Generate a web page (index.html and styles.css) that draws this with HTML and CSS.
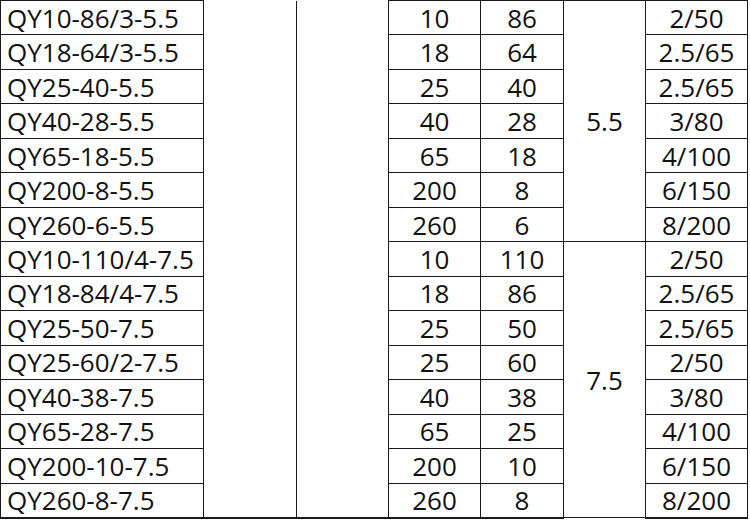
FILE: index.html
```html
<!DOCTYPE html>
<html>
<head>
<meta charset="utf-8">
<link rel="stylesheet" href="styles.css">
</head>
<body>
<table class="spec">
  <colgroup>
    <col class="c-model">
    <col class="c-blank1">
    <col class="c-blank2">
    <col class="c-flow">
    <col class="c-head">
    <col class="c-power">
    <col class="c-pipe">
  </colgroup>
  <tbody>
    <tr><td class="model">QY10-86/3-5.5</td><td class="blank" rowspan="15"></td><td class="blank" rowspan="15"></td><td>10</td><td>86</td><td class="power" rowspan="7">5.5</td><td>2/50</td></tr>
    <tr><td class="model">QY18-64/3-5.5</td><td>18</td><td>64</td><td>2.5/65</td></tr>
    <tr><td class="model">QY25-40-5.5</td><td>25</td><td>40</td><td>2.5/65</td></tr>
    <tr><td class="model">QY40-28-5.5</td><td>40</td><td>28</td><td>3/80</td></tr>
    <tr><td class="model">QY65-18-5.5</td><td>65</td><td>18</td><td>4/100</td></tr>
    <tr><td class="model">QY200-8-5.5</td><td>200</td><td>8</td><td>6/150</td></tr>
    <tr><td class="model">QY260-6-5.5</td><td>260</td><td>6</td><td>8/200</td></tr>
    <tr><td class="model">QY10-110/4-7.5</td><td>10</td><td>110</td><td class="power" rowspan="8">7.5</td><td>2/50</td></tr>
    <tr><td class="model">QY18-84/4-7.5</td><td>18</td><td>86</td><td>2.5/65</td></tr>
    <tr><td class="model">QY25-50-7.5</td><td>25</td><td>50</td><td>2.5/65</td></tr>
    <tr><td class="model">QY25-60/2-7.5</td><td>25</td><td>60</td><td>2/50</td></tr>
    <tr><td class="model">QY40-38-7.5</td><td>40</td><td>38</td><td>3/80</td></tr>
    <tr><td class="model">QY65-28-7.5</td><td>65</td><td>25</td><td>4/100</td></tr>
    <tr><td class="model">QY200-10-7.5</td><td>200</td><td>10</td><td>6/150</td></tr>
    <tr class="last"><td class="model">QY260-8-7.5</td><td>260</td><td>8</td><td>8/200</td></tr>
  </tbody>
</table>
</body>
</html>
```
FILE: styles.css
```css
html, body {
  margin: 0;
  padding: 0;
  background: #ffffff;
}
.spec {
  border-collapse: collapse;
  table-layout: fixed;
  width: 748px;
  margin-top: 0;
  font-family: "Open Sans", "Noto Sans", sans-serif;
  font-size: 26px;
  color: #111111;
}
.c-model { width: 203px; }
.c-blank1 { width: 93px; }
.c-blank2 { width: 92px; }
.c-flow { width: 92px; }
.c-head { width: 83px; }
.c-power { width: 82px; }
.c-pipe { width: 102px; }
.spec tr {
  height: 34.47px;
}
.spec td {
  border: 1px solid #1a1a1a;
  padding: 0;
  text-align: center;
  vertical-align: middle;
  line-height: 30px;
  white-space: nowrap;
  overflow: hidden;
}
.spec td.model {
  text-align: left;
  padding-left: 6px;
}
.spec td.blank {
  border-top: none;
  border-bottom: 2px solid #1a1a1a;
}
.spec tr.last td {
  border-bottom: 2px solid #1a1a1a;
}
.spec td.power:last-child {
  border-bottom: 2px solid #1a1a1a;
}
```
